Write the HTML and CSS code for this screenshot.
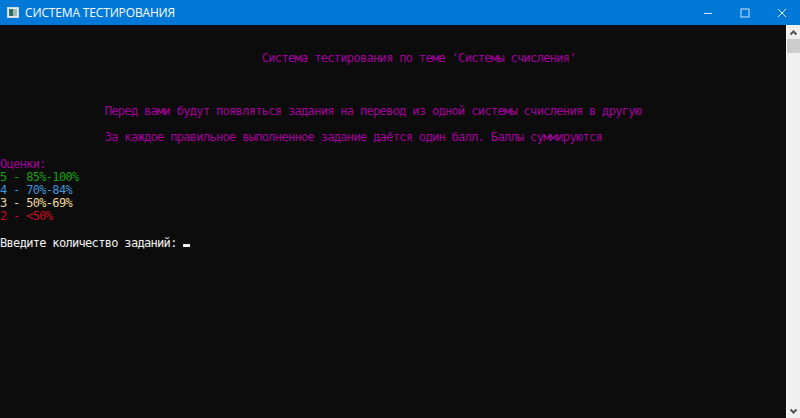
FILE: index.html
```html
<!DOCTYPE html>
<html lang="ru">
<head>
<meta charset="utf-8">
<title>СИСТЕМА ТЕСТИРОВАНИЯ</title>
<link rel="stylesheet" href="styles.css">
</head>
<body>
<div class="window">
  <header class="titlebar">
    <svg class="app-icon" width="13" height="13" viewBox="0 0 13 13">
      <rect x="0.5" y="1.5" width="11" height="10" fill="#e8eef2" stroke="#cfd8de"/>
      <rect x="2" y="3" width="4" height="7" fill="#2f6f5f"/>
      <rect x="6" y="3" width="4" height="7" fill="#9fb9b5"/>
    </svg>
    <span class="title">СИСТЕМА ТЕСТИРОВАНИЯ</span>
    <div class="controls">
      <span class="ctl"><svg width="10" height="10" viewBox="0 0 10 10"><path d="M1 5.5H9" stroke="#cfe2f6" fill="none"/></svg></span>
      <span class="ctl"><svg width="10" height="10" viewBox="0 0 10 10"><rect x="1" y="1" width="8" height="8" stroke="#cfe2f6" fill="none"/></svg></span>
      <span class="ctl"><svg width="10" height="10" viewBox="0 0 10 10"><path d="M1 1L9 9M9 1L1 9" stroke="#e4eef9" fill="none"/></svg></span>
    </div>
  </header>
  <div class="body">
    <pre class="console">


<span class="magenta">                                        Система тестирования по теме 'Системы счисления'</span>



<span class="magenta">                Перед вами будут появляться задания на перевод из одной системы счисления в другую</span>

<span class="magenta">                За каждое правильное выполненное задание даётся один балл. Баллы суммируются</span>

<span class="magenta">Оценки:</span>
<span class="green">5 - 85%-100%</span>
<span class="blue">4 - 70%-84%</span>
<span class="yellow">3 - 50%-69%</span>
<span class="red">2 - &lt;50%</span>

<span class="white">Введите количество заданий: </span><span class="cursor"></span></pre>
    <div class="scrollbar">
      <svg width="13" height="14" viewBox="0 0 13 14"><path d="M3.5 9.5L6.5 6.5L9.5 9.5" stroke="#555" stroke-width="2" fill="none"/></svg>
      <div class="thumb"></div>
      <div class="track"></div>
      <svg width="13" height="14" viewBox="0 0 13 14"><path d="M3.5 5.5L6.5 8.5L9.5 5.5" stroke="#555" stroke-width="2" fill="none"/></svg>
    </div>
  </div>
</div>
</body>
</html>
```
FILE: styles.css
```css
html, body { margin: 0; height: 100%; overflow: hidden; }
.window { display: flex; flex-direction: column; width: 800px; height: 418px; }
.titlebar {
  display: flex; align-items: center; height: 25px; flex: none;
  background: #0078d7; color: #fff;
  font: 12px "Open Sans", "Liberation Sans", sans-serif;
  padding-left: 7px; box-sizing: border-box;
}
.app-icon { margin-right: 5px; }
.title { letter-spacing: -0.15px; }
.controls { margin-left: auto; display: flex; }
.ctl { width: 37px; height: 25px; display: flex; align-items: center; justify-content: center; }
.body { flex: 1; display: flex; min-height: 0; }
.console {
  flex: 1; margin: 0; padding-top: 1px; background: #0c0c0c; color: #ccc;
  font: 12px/13.16px "DejaVu Sans Mono", monospace;
  letter-spacing: -0.68px; white-space: pre; overflow: hidden;
}
.magenta { color: #a4009c; }
.green { color: #13a10e; }
.blue { color: #3a96dd; }
.yellow { color: #f0d898; }
.red { color: #c50f1f; }
.white { color: #f2f2f2; }
.cursor { display: inline-block; width: 7px; height: 3px; background: #f2f2f2; vertical-align: 0; }
.scrollbar { width: 14px; flex: none; background: #f0f0f0; display: flex; flex-direction: column; border-left: 1px solid #fafafa; box-sizing: border-box; }
.scrollbar svg { display: block; flex: none; }
.thumb { height: 14px; background: #cdcdcd; flex: none; }
.track { flex: 1; }
```
